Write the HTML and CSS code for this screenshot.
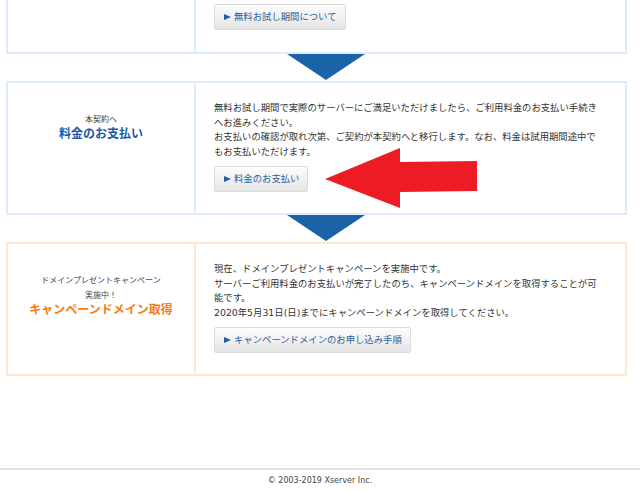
FILE: index.html
```html
<!DOCTYPE html>
<html lang="ja">
<head>
<meta charset="utf-8">
<title>お申し込みの流れ</title>
<link rel="stylesheet" href="styles.css">
</head>
<body>
<div class="flow">
  <div class="box blue cut">
    <div class="label"></div>
    <div class="body">
      <a class="btn" href="#"><span class="tri"></span>無料お試し期間について</a>
    </div>
  </div>
  <div class="down"><span class="arrow"></span></div>
  <div class="box blue">
    <div class="label">
      <p class="sub">本契約へ</p>
      <p class="title">料金のお支払い</p>
    </div>
    <div class="body">
      <p>無料お試し期間で実際のサーバーにご満足いただけましたら、ご利用料金のお支払い手続きへお進みください。</p>
      <p>お支払いの確認が取れ次第、ご契約が本契約へと移行します。なお、料金は試用期間途中でもお支払いただけます。</p>
      <a class="btn" href="#"><span class="tri"></span>料金のお支払い</a>
    </div>
    <svg class="pointer" width="165" height="75" viewBox="0 0 165 75" aria-hidden="true">
      <polygon points="5,38 80,7 80,21 157,20 157,50 80,51 80,67" fill="#ed1c24"/>
    </svg>
  </div>
  <div class="down"><span class="arrow"></span></div>
  <div class="box orange">
    <div class="label">
      <p class="sub">ドメインプレゼントキャンペーン</p>
      <p class="sub">実施中！</p>
      <p class="title">キャンペーンドメイン取得</p>
    </div>
    <div class="body">
      <p>現在、ドメインプレゼントキャンペーンを実施中です。<br>サーバーご利用料金のお支払いが完了したのち、キャンペーンドメインを取得することが可能です。<br>2020年5月31日(日)までにキャンペーンドメインを取得してください。</p>
      <a class="btn" href="#"><span class="tri"></span>キャンペーンドメインのお申し込み手順</a>
    </div>
  </div>
</div>
<footer class="footer">© 2003-2019 Xserver Inc.</footer>
</body>
</html>
```

FILE: styles.css
```css
html, body {
  margin: 0;
  padding: 0;
  background: #fff;
}
body {
  width: 640px;
  height: 492px;
  overflow: hidden;
  font-family: "DejaVu Sans", "Noto Sans CJK JP", sans-serif;
  color: #333;
}
p { margin: 0; }

.flow {
  margin: 0 13px 0 6px;
}

.box {
  position: relative;
  display: flex;
  border: 2px solid #dcecfd;
}
.box.orange { border-color: #fde9cf; }
.box.cut { border-top: 0; }

.label {
  width: 186px;
  flex: none;
  border-right: 2px solid #dcecfd;
  padding-top: 29px;
  text-align: center;
}
.orange .label { border-right-color: #fde9cf; }

.sub {
  font-size: 8px;
  line-height: 15px;
  color: #444;
}
.title {
  font-size: 12px;
  line-height: 15px;
  font-weight: bold;
  color: #1a5ba6;
}
.orange .title { color: #f97c0e; }

.body {
  flex: 1;
  padding: 18px 22px 21px 18px;
  font-size: 9.35px;
  line-height: 14.7px;
}
.cut .body { padding-top: 4px; padding-bottom: 22px; }

.btn {
  display: flex;
  width: fit-content;
  align-items: center;
  margin-top: 6px;
  padding: 5px 8px 5px 9px;
  border: 1px solid #dcdcdc;
  border-radius: 2px;
  background: linear-gradient(#fdfdfd, #e4e4e4);
  color: #2d5f9e;
  text-decoration: none;
  font-size: 9.35px;
  line-height: 14px;
}
.cut .btn { margin-top: 0; }

.tri {
  display: inline-block;
  width: 0;
  height: 0;
  margin-right: 3px;
  border-left: 7px solid #1c5ea8;
  border-top: 3.5px solid transparent;
  border-bottom: 3.5px solid transparent;
}

.down {
  height: 27px;
}
.arrow {
  display: block;
  width: 0;
  height: 0;
  margin-left: 281px;
  border-top: 26px solid #1b63a8;
  border-left: 39px solid transparent;
  border-right: 39px solid transparent;
}

.pointer {
  position: absolute;
  left: 312px;
  top: 58px;
}

.footer {
  margin-top: 92px;
  border-top: 2px solid #e2e2e2;
  padding-top: 5px;
  text-align: center;
  font-family: "DejaVu Sans", sans-serif;
  font-size: 8px;
  line-height: 12px;
  color: #444;
}
```
